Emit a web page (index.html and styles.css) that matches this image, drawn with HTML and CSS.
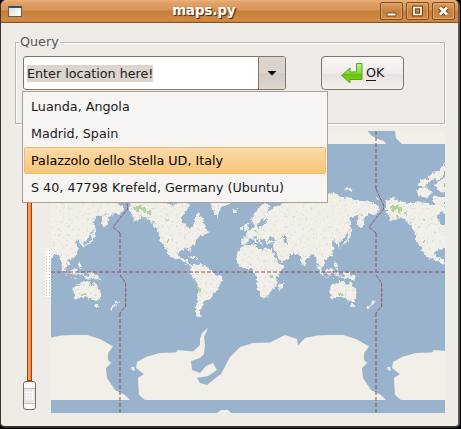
FILE: index.html
```html
<!DOCTYPE html>
<html lang="en">
<head>
<meta charset="utf-8">
<title>maps.py</title>
<link rel="stylesheet" href="styles.css">
</head>
<body>
<div class="window">
  <header class="titlebar">
    <span class="app-icon"></span>
    <h1 class="title">maps.py</h1>
    <div class="controls">
      <span class="control"><svg width="21" height="16" viewBox="0 0 21 16"><path d="M6 10H15V13H6Z" fill="#fff" stroke="#7d4c1c"/></svg></span>
      <span class="control"><svg width="21" height="16" viewBox="0 0 21 16"><path d="M7 4.500H14V11.500H7Z" fill="none" stroke="#7d4c1c" stroke-width="4"/><path d="M7 4.500H14V11.500H7Z" fill="none" stroke="#fff" stroke-width="1.600"/></svg></span>
      <span class="control"><svg width="21" height="16" viewBox="0 0 21 16"><path d="M7 4.500L14 11.500M14 4.500L7 11.500" stroke="#7d4c1c" stroke-width="5"/><path d="M7 4.500L14 11.500M14 4.500L7 11.500" stroke="#fff" stroke-width="2.800"/></svg></span>
    </div>
  </header>
  <main class="content">
    <fieldset class="query">
      <legend>Query</legend>
      <div class="query-row">
        <div class="combo">
          <div class="entry"><span class="selected">Enter location here!</span></div>
          <div class="arrow"><svg width="10" height="5"><path d="M.500 0H9.500L5 4.500Z"/></svg></div>
          <ul class="popup">
            <li>Luanda, Angola</li>
            <li>Madrid, Spain</li>
            <li class="active">Palazzolo dello Stella UD, Italy</li>
            <li>S 40, 47798 Krefeld, Germany (Ubuntu)</li>
          </ul>
        </div>
        <div class="button">
          <svg width="22" height="21" viewBox="0 0 22 21"><defs><linearGradient id="g" x2="0" y2="1"><stop stop-color="#c8e8a0"/><stop offset=".5" stop-color="#8ed648"/><stop offset=".55" stop-color="#62c400"/><stop offset="1" stop-color="#82d920"/></linearGradient></defs><path d="M15.500.500H21V16.500H9V20L.700 12.500 9 5V9H15.500Z" fill="url(#g)" stroke="#58a51b"/></svg>
          <span><u>O</u>K</span>
        </div>
      </div>
    </fieldset>
    <div class="lower">
      <div class="scale"><div class="track"></div><div class="thumb"><i></i></div></div>
      <div class="grip"></div>
      <svg class="map" width="394" height="282" viewBox="51 131 394 282">
        <defs>
          <filter id="terrain" filterUnits="userSpaceOnUse" x="51" y="144" width="394" height="256" color-interpolation-filters="sRGB">
            <feTurbulence type="fractalNoise" baseFrequency=".32" numOctaves="2" seed="4" result="n"/>
            <feDisplacementMap in="SourceGraphic" in2="n" scale="5" xChannelSelector="R" yChannelSelector="G"/>
          </filter>
          <filter id="specks" filterUnits="userSpaceOnUse" x="51" y="144" width="394" height="176" color-interpolation-filters="sRGB">
            <feTurbulence type="fractalNoise" baseFrequency=".38" numOctaves="2" seed="9"/>
            <feColorMatrix values="0 0 0 0 .68  0 0 0 0 .75  0 0 0 0 .83  2 0 0 0 -1.200" result="s"/>
            <feComposite in="s" in2="SourceGraphic" operator="in"/>
          </filter>
          <g id="land">
            <path d="M130 203L131 200 136 198 144 201 152 203 159 203 162 201 169 203 176 205 182 202 190 204 186.500 211 182 215 181.500 221 185 225 190 229 192 226 195 222 195 215 198 213 203 218 205 228 210 232 203 235 198 237 195 242 190 248 191 253 188 249 181.500 250 178 253 180 257.500 185 259 188 259 188 262 191 265 190.500 267 186 263 181 260.500 174 258.500 169 255 165 249 170 256 166 250 160 240 158 230 150 221 157 225 150 219 144 218 139 219 133 222 134 217 130 213 130 207Z"/>
            <path d="M191 266L194 264 199 264 204 266 209 268 212 272 217 275 222.500 276 222 281 220 283 219 289 215 292 212 297 209 299.500 205 302 203 306 200 309 200 314 201 318 197 317 195 314 196 306 198 298 199 290 198 285 195 281 191 275 190.500 271Z"/>
            <path d="M210 203L213 212 217 218 220 209 231 202 231 195 209 195ZM232 209L238 209 237 213 233 213ZM244 225L248 222 249 230 244 230ZM240 226H243V230H240ZM188 256L194 257 199 259 194 259Z"/>
            <path d="M242.500 246.500L247 245 255 244 256 247 262 250 265 248 272 249 274 255 279 264 284 264 282.500 269 277 276 276 286 272 290 268 296 261 298 258 290 256.500 283 257 278 254 273 252.500 269 245 269 239 266 236 260 237 253ZM284 281L282 289 279 290 279 285Z"/>
            <path d="M241.500 237.500L246.500 237.500 246 233 250 230 254 227 252 220 253 215 258 208 265 202 270 206 267 212 272 209 283 203 300 200 315 193 328 194 335 193 342 198 348 197 355 200 362 201 372 202 378 206 380 210 375 215 370 213 365 217 363 227 359 228 359 220 362 214 355 216 350 218 345 225 350 219 350 228 343 240 339 243 340 248 337 245 333 240 332 243 334 250 331 257 324 260 326 264 321 267 320 263 322 271 317 263 316 257 312 254 308 258 306 259 304 267 301 262 300 256 297 254 290 254 288 259 280 263 277 257 274 250 273 247 274 243 266 244 265 240 260 238 263 246 258 240 256 236 253 237 259 243 256 243 252 238 248 240 246 245 241.500 244Z"/>
            <path d="M350 228L352 229 350 237 347 243 340 246 347 240ZM359 212L362 218 359 227 357 223Z"/>
            <path d="M331 273H336L342 276 357 279 350 279 342 278 337 275ZM330 268L334 270 330 275 325 272ZM316 264L321 269 324 275 321 274ZM324 276L331 278 338 278 331 279ZM334 260L337 264 337 270 335 267ZM337 272L340 275 338 277Z"/>
            <path d="M329 288L336 283 339 281 345 281 346 284 349 286 350 280 353 286 357 291 356 298 353 302 348 300 343 297 337 297 331 299ZM351 304H354V307H351ZM373 300L375 302 371 306 367 310 366 308 370 305Z"/>
            <path d="M343 272L349 273 354 277 357 280 351 279 346 277Z"/>
          </g>
          <path id="ice" d="M145 400L139 395 138 378 144 374 136 368 137 362 147 356.500 160 353 176 352.500 178 350 193 351.500 200 345 200 339 202 333 208 328 204 337 205 345 204 354 200 358 191 361 192 370 200 373 206 366 213 363 217 370 208 376 197 378 200 383 207 385 213 380 221 374 230 357 240 347 253 343 270 342.500 285 335 297 339 298 345.500 305 338 317 335.500 330 335 343 335 356 339 369 346.500 364 353 364 360 367 363 362 368 363 378 371 390 381 395 386 400ZM131 367L134 367 135 371 132 370Z"/>
          <g id="waters"><path d="M267 241L270 236 277 240 275 242ZM283 236L287 234 286 239 288 243 285 244 283 239ZM272 248L274 249 281 263 279 264Z"/><path d="M258 225L264 216 263 221 268 219 264 225 258 228Z"/></g>
          <g id="woods"><path d="M133 207H137V205H142V208H146V212H143V209H139V212H136V209H133ZM148 211H151V214H148ZM140 215H142V218H140ZM198 285L200 290 199 294 197 288ZM338 294L342 293 343 296H338ZM270 275H272V278H270ZM255 230H257V232H255ZM166 218L168 221H166ZM162 226H164V228H162ZM167 240H169V242H167Z"/></g>
        </defs>
        <rect class="sea" x="51" y="131" width="394" height="282"/>
        <path class="land" d="M51 131H367.700L372 136 378 139 384 141 386 144H51ZM395 131H445V144H402L396 138ZM217 413L221 410 228 410 231 413Z"/>
        <g class="land" filter="url(#terrain)">
          <use href="#land"/><use href="#land" x="-256"/><use href="#land" x="256"/>
          <path d="M445 162L441 167 438 172 435 170 432 175 429 175 427 180 421 179 418 184 424 187 430 182 435 178 438 181 445 174ZM417 190L427 187 432 193 428 198 418 196ZM434 184L445 178V194L438 190ZM432 195L445 198V214L438 212 440 204 434 203ZM440 205L445 203V230H429L430 205ZM345 187L354 189 351 191 346 190ZM375 198H379L378 200Z"/>
        </g>
        <g class="land"><use href="#ice"/><use href="#ice" x="-256"/><use href="#ice" x="256"/></g>
        <g class="sea" filter="url(#terrain)"><use href="#waters"/><path d="M437 216L442 211 445 214V225H441Z"/></g>
        <g filter="url(#specks)"><use href="#land"/><use href="#land" x="-256"/><use href="#land" x="256"/></g>
        <g class="woods" filter="url(#terrain)"><use href="#woods"/><use href="#woods" x="-256"/><use href="#woods" x="256"/></g>
        <g class="lines">
          <path class="wide" d="M51 272H445M120 233V275M376 131V189M376 233V275M120 313V413M376 313V413"/>
          <path d="M376 189L383.500 205V209L369 227 376 233M376 275L381.700 283V306L376 313M120 189L127.500 205V209L113 227 120 233M120 275L125.700 283V306L120 313"/>
        </g>
      </svg>
    </div>
  </main>
</div>
</body>
</html>
```
FILE: styles.css
```css
* { box-sizing: border-box; }
body { margin: 0; background: #000; font: 12.730px "DejaVu Sans", sans-serif; color: #1a1a1a; }
.window { width: 460px; height: 428px; border: solid #3b302b; border-width: 0 2px 2px 1px; border-right-color: #5d554f; border-radius: 6px 6px 5px 5px; background: #efebe7; overflow: hidden; }
.titlebar { height: 23px; display: flex; align-items: center; padding: 0 3px 0 7px; background: linear-gradient(#edb17b 0, #dfa067 3px, #d99755 10px, #c67f38 11px, #d18a45 20px, #c9803c 100%); border-bottom: 1px solid #87501f; }
.app-icon { width: 14px; height: 11px; border: 1px solid #655e59; border-top: 2px solid #385064; background: linear-gradient(135deg, #ddd, #fff); }
.title { flex: 1; margin: 0 0 0 6px; text-align: center; font-size: 13.300px; line-height: 18px; color: #fff; text-shadow: 1px 1px 1px #402008; }
.controls { display: flex; gap: 3px; }
.control { width: 23px; height: 18px; border: 1px solid #805020; border-radius: 2px; background: linear-gradient(#dba066, #c38242 50%, #ce8b49); box-shadow: inset 0 0 0 1px #e0a66f; }
.control svg { display: block; }
.content { padding: 12px 13px 0 14px; }
.query { height: 89px; margin: 0; padding: 7px 7px 0; border: 1px solid #bcb6b2; box-shadow: 1px 1px #fff, inset 1px 1px #fff; min-width: 0; width: 430px; }
.query legend { height: 14px; line-height: 13px; padding: 0 1px; margin-left: -4px; color: #555; }
.query-row { display: flex; gap: 35px; }
.combo { position: relative; display: flex; width: 263px; height: 34px; border: 1px solid #82756d; border-radius: 3px; background: #fff; }
.entry { flex: 1; padding: 8px 3px; white-space: nowrap; }
.selected { display: inline-block; height: 17px; line-height: 17px; background: #dcd4cd; }
.arrow { width: 27px; display: flex; justify-content: center; align-items: center; border-left: 1px solid #82756d; background: linear-gradient(#ddd3cd 50%, #d3c8c2 50%, #ded6d1); border-radius: 0 2px 2px 0; }
.popup { position: absolute; left: -2px; top: 34px; z-index: 2; width: 306px; height: 112px; margin: 0; padding: 1px; list-style: none; border: 1px solid #ac9f94; background: #f6f5f3; }
.popup li { height: 27px; line-height: 26px; padding-left: 6px; border: 1px solid transparent; white-space: nowrap; }
.popup .active { background: linear-gradient(#ffdba8, #f5c478); border-color: #efbb70; border-radius: 2px; color: #000; }
.button { display: flex; align-items: center; gap: 3px; width: 83px; height: 34px; padding-left: 19px; border: 1px solid #82756d; border-radius: 4px; background: linear-gradient(#f8f6f5, #f0ecea 52%, #e8e2df 53%, #f3f0ee); }
.button span { margin-top: -1px; }
.button u { text-underline-offset: 3px; }
.lower { display: flex; margin-top: 7px; height: 282px; }
.scale { flex: none; width: 13px; margin-left: 8px; display: flex; flex-direction: column; align-items: center; }
.track { width: 5px; height: 250px; border: 1px solid #97440b; border-top: 0; background: linear-gradient(90deg, #ffa45f, #ff8237); }
.thumb { width: 13px; height: 29px; display: grid; place-items: center; border: 1px solid #776b63; border-radius: 3px; background: linear-gradient(#faf9f8 6px, #c9c3be 6px 7px, #e9e5e1 7px 21px, #c9c3be 21px 22px, #faf9f8 22px); }
.thumb i { width: 9px; height: 9px; background: radial-gradient(circle, #fff 1px, transparent 1.200px) 0 0 / 3px 3px; }
.grip { flex: none; width: 6px; height: 48px; margin: 118px 0 0 9px; background: radial-gradient(circle, #bbb5b0 .800px, #fff 1px) 0 0 / 3px 3px; }
.map { display: block; flex: none; }
.sea { fill: #99b3cc; }
.land { fill: #f2efe9; }
.woods { fill: #b0d49c; }
.lines path { fill: none; stroke: #8c5666; stroke-width: 1; stroke-dasharray: 4 1; }
.lines .wide { stroke: #943f50; stroke-opacity: .45; stroke-width: 2; stroke-dasharray: 4 2; }
```
